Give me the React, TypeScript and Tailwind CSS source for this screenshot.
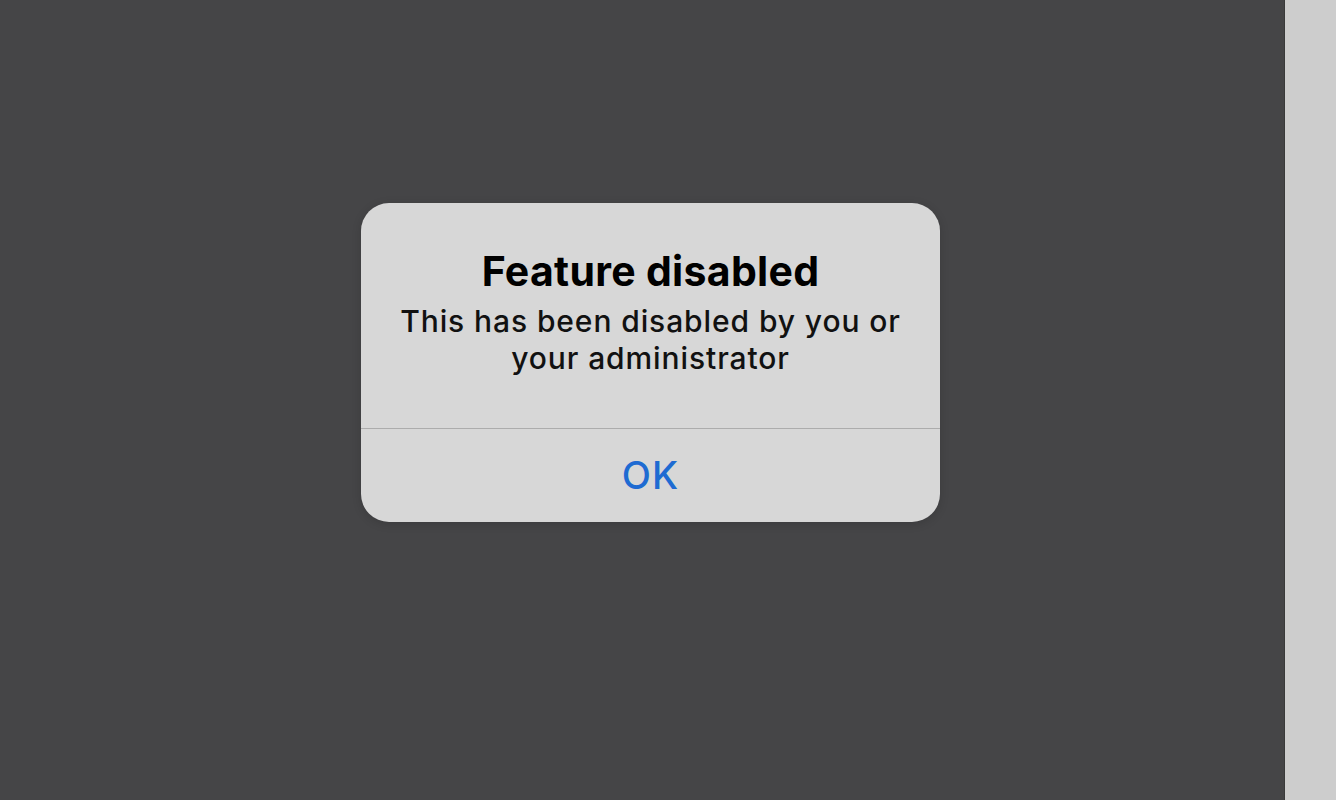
export default function App() {
  return (
    <div className="flex h-[800px] w-[1336px] overflow-hidden font-['Inter',sans-serif]">
      <div className="flex flex-1 items-start bg-[#454547] pt-[203px] pl-[361px]">
        <div className="flex w-[579px] flex-col rounded-[28px] bg-[#d7d7d7] shadow-[0_2px_10px_rgba(0,0,0,0.15)]">
          <div className="flex h-[225px] flex-col items-center px-6 pt-[44px] text-center">
            <h1 className="text-[41px] font-bold leading-[48px] tracking-[0.3px] text-black">
              Feature disabled
            </h1>
            <p className="mt-[8px] text-[30px] font-medium leading-[37px] tracking-[0.9px] text-[#111]">
              This has been disabled by you or
              <br />
              your administrator
            </p>
          </div>
          <div className="h-px bg-[#acacac]" />
          <button
            type="button"
            className="flex h-[93px] items-center justify-center text-[38px] font-medium tracking-[1px] text-[#1e6bd2]"
          >
            OK
          </button>
        </div>
      </div>
      <div className="w-[52px] border-l border-[#3a3a3a] bg-[#cdcdcd]" />
    </div>
  );
}
